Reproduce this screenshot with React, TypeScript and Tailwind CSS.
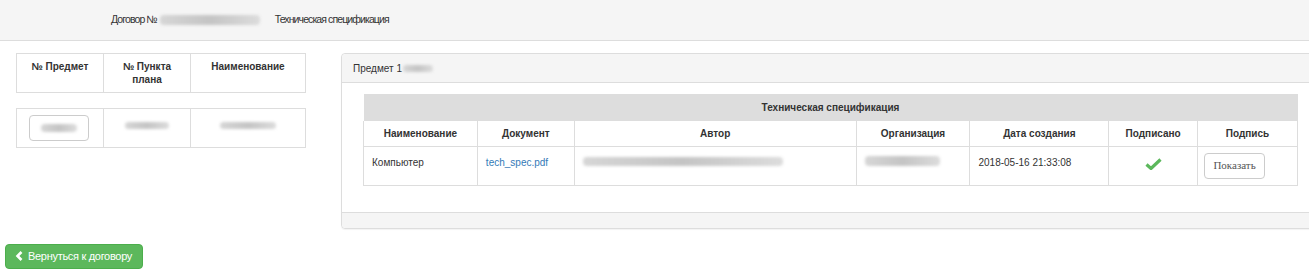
import React from 'react';

const Blur = ({ w, h = 8, className = '' }: { w: number; h?: number; className?: string }) => (
  <span
    className={`inline-block align-middle rounded-sm bg-gradient-to-r from-[#d6d6d6] via-[#c4c4c4] to-[#dcdcdc] blur-[1.5px] ${className}`}
    style={{ width: w, height: h }}
  />
);

const CheckIcon = () => (
  <svg width="17" height="12" viewBox="0 0 17 12" className="inline-block">
    <path d="M1.5 6.5 L6 10.5 L15.5 1.5" fill="none" stroke="#5cb85c" strokeWidth="3.2" strokeLinejoin="miter" />
  </svg>
);

const ChevronLeft = () => (
  <svg width="8" height="10" viewBox="0 0 8 10" className="inline-block">
    <path d="M6.5 1 L2.5 5 L6.5 9" fill="none" stroke="#fff" strokeWidth="2.6" />
  </svg>
);

const App: React.FC = () => {
  return (
    <div className="w-[1309px] h-[277px] overflow-hidden bg-white text-[#333] font-['Liberation_Sans',Arial,sans-serif]">
      {/* HEADER BAR */}
      <div className="h-[41px] bg-[#f5f5f5] border-b border-[#dddddd] flex items-center pl-[111px] text-[10.5px] tracking-[-0.9px]">
        <span>Договор №</span>
        <Blur w={100} h={10} className="ml-[3px]" />
        <span className="ml-[15px]">Техническая спецификация</span>
      </div>

      <div className="flex">
        {/* LEFT COLUMN */}
        <div className="w-[290px] ml-[16px] mt-[12px] shrink-0">
          <table className="w-full border-collapse text-[10px]">
            <thead>
              <tr className="font-bold">
                <th className="w-[87px] border border-[#ddd] px-2 pt-[6px] pb-[6px] align-top leading-[13px]">№ Предмет</th>
                <th className="w-[87px] border border-[#ddd] px-2 pt-[6px] pb-[6px] align-top leading-[13px]">№ Пункта<br />плана</th>
                <th className="border border-[#ddd] px-2 pt-[6px] pb-[6px] align-top leading-[13px]">Наименование</th>
              </tr>
            </thead>
          </table>
          <table className="w-full border-collapse text-[10px] mt-[15px]">
            <tbody>
              <tr className="h-[39px]">
                <td className="w-[87px] border border-[#ddd] px-[12px] py-[6px] align-top">
                  <button className="w-[60px] h-[26px] border border-[#ccc] rounded-[4px] bg-white flex items-center justify-center">
                    <Blur w={36} h={8} />
                  </button>
                </td>
                <td className="w-[87px] border border-[#ddd] px-2 pt-[8px] align-top text-center">
                  <Blur w={44} h={7} />
                </td>
                <td className="border border-[#ddd] px-2 pt-[8px] align-top text-center">
                  <Blur w={56} h={7} />
                </td>
              </tr>
            </tbody>
          </table>
        </div>

        {/* RIGHT PANEL */}
        <div className="ml-[35px] mt-[12px] w-[1000px] shrink-0 border border-[#ddd] rounded-[4px] shadow-[0_1px_1px_rgba(0,0,0,0.05)]">
          <div className="h-[29px] bg-[#f5f5f5] border-b border-[#ddd] flex items-center pl-[11px] text-[10px] rounded-t-[4px]">
            <span>Предмет 1</span>
            <Blur w={30} h={7} className="ml-[1px]" />
          </div>
          <div className="pl-[21px] pt-[11px] pb-[26px]">
            <table className="w-[935px] border-collapse text-[10px]">
              <thead>
                <tr>
                  <th colSpan={7} className="h-[27px] bg-[#dddddd] font-bold text-center">Техническая спецификация</th>
                </tr>
                <tr className="h-[25px] font-bold">
                  <th className="w-[114px] border border-[#ddd] border-t-0">Наименование</th>
                  <th className="w-[97px] border border-[#ddd] border-t-0">Документ</th>
                  <th className="w-[282px] border border-[#ddd] border-t-0">Автор</th>
                  <th className="w-[114px] border border-[#ddd] border-t-0">Организация</th>
                  <th className="w-[139px] border border-[#ddd] border-t-0">Дата создания</th>
                  <th className="w-[89px] border border-[#ddd] border-t-0">Подписано</th>
                  <th className="w-[100px] border border-[#ddd] border-t-0">Подпись</th>
                </tr>
              </thead>
              <tbody>
                <tr className="h-[39px]">
                  <td className="border border-[#ddd] px-[8px] pt-[8px] align-top">Компьютер</td>
                  <td className="border border-[#ddd] px-[8px] pt-[8px] align-top">
                    <a className="text-[#337ab7]">tech_spec.pdf</a>
                  </td>
                  <td className="border border-[#ddd] px-[8px] pt-[7px] align-top">
                    <Blur w={200} h={9} />
                  </td>
                  <td className="border border-[#ddd] px-[8px] pt-[6px] align-top">
                    <Blur w={75} h={10} />
                  </td>
                  <td className="border border-[#ddd] px-[8px] pt-[8px] align-top">2018-05-16 21:33:08</td>
                  <td className="border border-[#ddd] pt-[9px] align-top text-center">
                    <CheckIcon />
                  </td>
                  <td className="border border-[#ddd] px-[6px] pt-[6px] align-top">
                    <button className="w-[61px] h-[26px] border border-[#ccc] rounded-[4px] bg-white text-[11px] text-[#555] font-['Liberation_Serif',serif]">
                      Показать
                    </button>
                  </td>
                </tr>
              </tbody>
            </table>
          </div>
          <div className="h-[16px] bg-[#f5f5f5] border-t border-[#ddd] rounded-b-[4px]" />
        </div>
      </div>

      {/* BACK BUTTON */}
      <div className="pl-[5px] mt-[15px]">
        <button className="h-[25px] w-[138px] bg-[#5cb85c] border border-[#4cae4c] rounded-[4px] text-white text-[11px] flex items-center pl-[9px] gap-[5px] tracking-[-0.3px]">
          <ChevronLeft />
          <span>Вернуться к договору</span>
        </button>
      </div>
    </div>
  );
};

export default App;
